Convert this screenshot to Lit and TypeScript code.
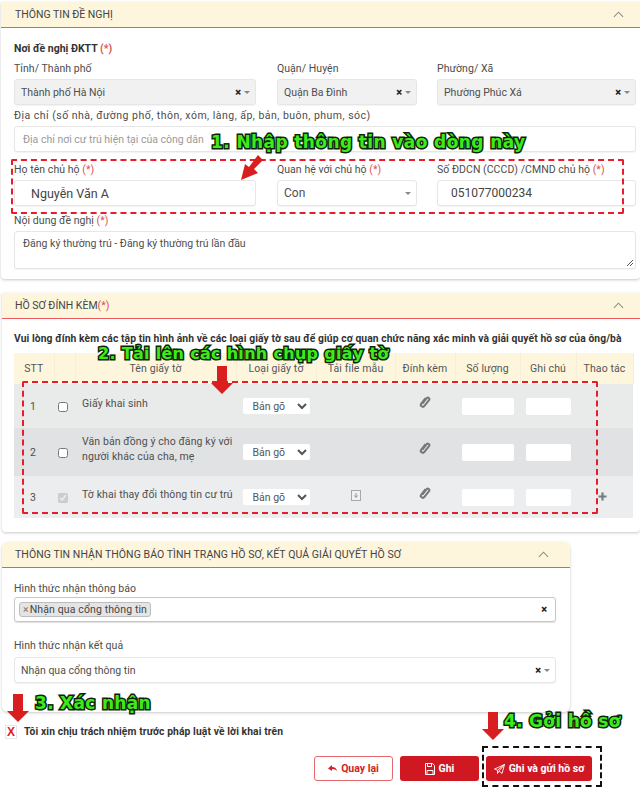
import { LitElement, html, css } from "lit";
import { customElement } from "lit/decorators.js";

const Star = () => html`<span class="req">(*)</span>`;
const chevUp = html`<svg class="chev" viewBox="0 0 12 7" width="11" height="7"><path d="M1 6l5-5 5 5" fill="none" stroke="#8a8a8a" stroke-width="1.1"/></svg>`;
const selEnd = (clear = true, arrow = true) => html`<span class="sel-end">
  ${clear ? html`<span class="x">×</span>` : ""}
  ${arrow ? html`<span class="caret"></span>` : ""}
</span>`;
const clip = html`<svg viewBox="0 0 12 14" width="12" height="14"><g transform="rotate(38 6 7)"><path d="M4 3.500v7a2 2 0 0 0 4 0V3a1.500 1.500 0 0 0-3 0v7" fill="none" stroke="#77777a" stroke-width="2"/></g></svg>`;
const dl = html`<svg viewBox="0 0 10 11" width="10" height="11"><rect x=".5" y=".5" width="9" height="10" fill="#f1f1f1" stroke="#a8a8a8"/><path d="M5 3v4M3.300 5.500L5 7.500l1.700-2" fill="none" stroke="#8a8a8a" stroke-width=".9"/></svg>`;
const plus = html`<svg viewBox="0 0 9 9" width="9" height="9"><path d="M4.500 .5v8M.5 4.500h8" stroke="#737b85" stroke-width="2.200"/></svg>`;

const rows = [
  { n: 1, name: ["Giấy khai sinh"], checked: false, dl: false, plus: false },
  { n: 2, name: ["Văn bản đồng ý cho đăng ký với", "người khác của cha, mẹ"], checked: false, dl: false, plus: false },
  { n: 3, name: ["Tờ khai thay đổi thông tin cư trú"], checked: true, dl: true, plus: true },
];

@customElement("app-root")
export class AppRoot extends LitElement {
  static styles = css`
    :host { display: block; position: relative; width: 640px; height: 791px; overflow: hidden; background: #fff;
      font-family: Roboto, "Liberation Sans", sans-serif; font-size: 10.500px; color: #4b4b4b; }
    * { box-sizing: border-box; }
    .page { display: flex; flex-direction: column; padding-top: 2px; }
    .card { background: #fff; border-radius: 0 0 4px 4px; box-shadow: 0 1px 3px rgba(0,0,0,.22); }
    .c1 { height: 277px; margin-left: 1px; }
    .c2 { height: 239px; margin: 14px 0 0 2px; }
    .c3 { height: 170px; margin: 10px 0 0 2px; width: 568px; border-radius: 6px; }
    .head { height: 26px; background: #fdf5dc; border-bottom: 1.500px solid #ee5a5d; display: flex; align-items: center;
      justify-content: space-between; padding: 0 16px 0 14px; font-size: 10.500px; color: #444; }
    .c2 .head { padding-left: 13px; }
    .c3 .head { padding-left: 13px; padding-right: 21px; border-radius: 6px 6px 0 0; letter-spacing: .06px; }
    .req { color: #d9534f; }
    .b1 { padding: 14px 3px 0 13px; }
    .title { font-weight: 700; color: #333; font-size: 10.500px; height: 13px; line-height: 13px; }
    .grid { display: grid; grid-template-columns: 263px 160px 199px; }
    .grid > .f:nth-child(1) { padding-right: 21px; }
    .grid > .f:nth-child(2) { padding-right: 20px; }
    label { display: block; height: 13px; line-height: 13px; white-space: nowrap; color: #4c4c4c; letter-spacing: .05px; }
    label.wide { letter-spacing: .48px; }
    .f { display: flex; flex-direction: column; gap: 4px; }
    .ctl { height: 26px; border: 1px solid #e6e6e6; border-radius: 3px; background: #fff; display: flex; align-items: center;
      padding: 0 5px 0 6px; box-shadow: 0 1px 1px rgba(0,0,0,.05); position: relative; color: #4f4f4f; white-space: nowrap; }
    .ro { background: #f1f1f1; }
    .sel-end { margin-left: auto; display: flex; align-items: center; gap: 3px; }
    .x { font-weight: 900; color: #222; font-size: 11px; line-height: 1; }
    .caret { width: 0; height: 0; border: 3px solid transparent; border-top: 3px solid #888; border-bottom: 0; }
    .big { font-size: 12.500px; padding-left: 16px; color: #444; }
    .num-in { padding-left: 13px; font-size: 12px; }
    .sm { font-size: 12px; }
    .ph { color: #9a9a9a; padding-left: 8px; }
    .r1 { margin-top: 7px; }
    .r2 { margin-top: 4px; width: 622px; }
    .r3 { margin-top: 11px; }
    .r4 { margin-top: 8px; width: 622px; }
    .area { height: 38px; align-items: flex-start; padding: 5px 8px; }
    .grip { position: absolute; right: 1px; bottom: 1px; }
    .note { margin: 14px 0 0 12px; height: 12px; line-height: 12px; font-weight: 700; color: #333; white-space: nowrap; font-size: 10.300px; letter-spacing: .09px; }
    table { border-collapse: collapse; table-layout: fixed; width: 619px; margin: 8px 0 0 12px; }
    th { height: 31px; background: #fdf6dd; font-weight: 400; color: #555; text-align: center; border-right: 1px solid #f5eed8; padding: 0; letter-spacing: .12px; }
    td { padding: 0; vertical-align: middle; text-align: center; color: #4f4f4f; }
    tr.a td { background: #e9eaea; height: 44px; }
    tr.b td { background: #e1e2e3; height: 48px; }
    tr.c td { background: #ecedee; height: 42px; }
    td.num { text-align: left; padding-left: 16px; }
    td.chk { padding-right: 3px; }
    td.name { text-align: left; padding: 0 0 6px 7px; line-height: 15px; white-space: nowrap; letter-spacing: .1px; }
    td.up { padding-bottom: 6px; }
    td.act { text-align: left; padding-left: 22px; }
    input[type=checkbox] { width: 10px; height: 10px; margin: 0; accent-color: #c8c8c8; vertical-align: middle; }
    select.kind { width: 67px; height: 16px; border: 0; border-radius: 2px; background: #fff; font: 10.500px Roboto, sans-serif; color: #555; padding-left: 6px; }
    .blank { display: block; height: 17px; background: #fff; border-radius: 2px; margin: auto; }
    .w1 { width: 52px; } .w2 { width: 45px; }
    .b3 { padding: 14px 14px 0 12px; }
    .multi { height: 25px; margin-top: 2px; border: 1px solid #c6c6c6; border-radius: 3px; padding: 0 8px 0 4px; display: flex; align-items: center; width: 542px; box-shadow: 0 1px 1px rgba(0,0,0,.12); }
    .tag { height: 15px; background: #e4e4e4; border: 1px solid #bdbdbd; border-radius: 3px; display: flex; align-items: center; padding: 0 3px; color: #444; letter-spacing: .12px; }
    .tag i { font-style: normal; color: #777; margin-right: 1px; }
    .single { width: 542px; margin-top: 5px; height: 26px; }
    .gap { margin-top: 17px; }
    .consent { display: flex; align-items: center; gap: 7px; margin: 12px 0 0 5px; height: 14px; font-weight: 700; color: #333; font-size: 10.300px; letter-spacing: .1px; }
    .cb { width: 12px; height: 14px; margin-top: 2px; background: #fff; border: 1px solid #e6e6e6; color: #e01b22; font: 700 12px "Liberation Sans", sans-serif; display: flex; align-items: center; justify-content: center; }
    .actions { display: flex; gap: 7px; margin: 18px 0 0 314px; }
    .btn { height: 25px; border-radius: 3px; display: flex; align-items: center; justify-content: center; gap: 4px; font-weight: 700; font-size: 10.500px; }
    .ghost { width: 79px; background: #fff; border: 1px solid #e4686c; color: #d3232a; }
    .solid { background: #d01822; color: #fff; }
    .s1 { width: 79px; } .s2 { width: 106px; }
    .ov { position: absolute; pointer-events: none; }
    .dash { border: 2px dashed #e81c2c; border-radius: 2px; }
    .d1 { left: 11px; top: 159px; width: 613px; height: 55px; }
    .d2 { left: 22px; top: 381px; width: 576px; height: 133px; }
    .d3 { left: 482px; top: 746px; width: 120px; height: 41px; border: 2px dashed #111; border-radius: 0; }
    .ann { font-family: "DejaVu Sans", sans-serif; font-weight: 700; color: #3fea1c; -webkit-text-stroke: 3px #0b2407; paint-order: stroke fill; white-space: nowrap; line-height: 20px; height: 20px; }
    .a1 { left: 211px; top: 132px; font-size: 17px; letter-spacing: .4px; }
    .a2 { left: 98px; top: 344px; font-size: 16px; letter-spacing: .3px; }
    .a3 { left: 35px; top: 693px; font-size: 17px; letter-spacing: .3px; }
    .a4 { left: 504px; top: 711px; font-size: 17px; letter-spacing: .3px; }
  `;

  downArrow(x: number, y: number) {
    return html`<svg class="ov" style="left:${x}px;top:${y}px" width="22" height="28" viewBox="0 0 22 28">
      <path d="M6 0h10v17h6L11 28 0 17h6z" fill="#d81e1e"/></svg>`;
  }

  render() {
    return html`
      <div class="page">
        <section class="card c1">
          <div class="head"><span>THÔNG TIN ĐỀ NGHỊ</span>${chevUp}</div>
          <div class="b1">
            <div class="title">Nơi đề nghị ĐKTT ${Star()}</div>
            <div class="grid r1">
              <div class="f"><label>Tỉnh/ Thành phố</label><div class="ctl ro">Thành phố Hà Nội${selEnd()}</div></div>
              <div class="f"><label>Quận/ Huyện</label><div class="ctl ro">Quận Ba Đình${selEnd()}</div></div>
              <div class="f"><label>Phường/ Xã</label><div class="ctl ro">Phường Phúc Xá${selEnd()}</div></div>
            </div>
            <div class="f r2"><label class="wide">Địa chỉ (số nhà, đường phố, thôn, xóm, làng, ấp, bản, buôn, phum, sóc)</label>
              <div class="ctl ph">Địa chỉ nơi cư trú hiện tại của công dân</div></div>
            <div class="grid r3">
              <div class="f"><label>Họ tên chủ hộ ${Star()}</label><div class="ctl big">Nguyễn Văn A</div></div>
              <div class="f"><label>Quan hệ với chủ hộ ${Star()}</label><div class="ctl sm">Con${selEnd(false)}</div></div>
              <div class="f"><label>Số ĐDCN (CCCD) /CMND chủ hộ ${Star()}</label><div class="ctl big num-in">051077000234</div></div>
            </div>
            <div class="f r4"><label>Nội dung đề nghị ${Star()}</label>
              <div class="ctl area">Đăng ký thường trú - Đăng ký thường trú lần đầu
                <svg class="grip" width="8" height="8" viewBox="0 0 8 8"><path d="M7 1L1 7M7 4L4 7" stroke="#555" stroke-width="1"/></svg>
              </div></div>
          </div>
        </section>

        <section class="card c2">
          <div class="head"><span>HỒ SƠ ĐÍNH KÈM${Star()}</span>${chevUp}</div>
          <div class="note">Vui lòng đính kèm các tập tin hình ảnh về các loại giấy tờ sau để giúp cơ quan chức năng xác minh và giải quyết hồ sơ của ông/bà</div>
          <table>
            <colgroup>
              <col style="width:40px"/><col style="width:21px"/><col style="width:161px"/><col style="width:80px"/>
              <col style="width:79px"/><col style="width:60px"/><col style="width:65px"/><col style="width:56px"/><col style="width:57px"/>
            </colgroup>
            <thead><tr><th>STT</th><th></th><th>Tên giấy tờ</th><th>Loại giấy tờ</th><th>Tải file mẫu</th><th>Đính kèm</th><th>Số lượng</th><th>Ghi chú</th><th>Thao tác</th></tr></thead>
            <tbody>
              ${rows.map((r, i) => html`<tr class=${["a", "b", "c"][i]}>
                <td class="num">${r.n}</td>
                <td class="chk"><input type="checkbox" .checked=${r.checked} ?disabled=${r.checked}/></td>
                <td class="name">${r.name.map((l) => html`${l}<br/>`)}</td>
                <td><select class="kind"><option>Bản gõ</option></select></td>
                <td>${r.dl ? dl : ""}</td>
                <td class="up">${clip}</td>
                <td><span class="blank w1"></span></td>
                <td><span class="blank w2"></span></td>
                <td class="act">${r.plus ? plus : ""}</td>
              </tr>`)}
            </tbody>
          </table>
        </section>

        <section class="card c3">
          <div class="head"><span>THÔNG TIN NHẬN THÔNG BÁO TÌNH TRẠNG HỒ SƠ, KẾT QUẢ GIẢI QUYẾT HỒ SƠ</span>${chevUp}</div>
          <div class="b3">
            <label>Hình thức nhận thông báo</label>
            <div class="multi"><span class="tag"><i>×</i>Nhận qua cổng thông tin</span>${selEnd(true, false)}</div>
            <label class="gap">Hình thức nhận kết quả</label>
            <div class="ctl single">Nhận qua cổng thông tin${selEnd()}</div>
          </div>
        </section>

        <div class="consent"><span class="cb">X</span><span>Tôi xin chịu trách nhiệm trước pháp luật về lời khai trên</span></div>

        <div class="actions">
          <div class="btn ghost"><svg width="9" height="7" viewBox="0 0 9 7"><path d="M0 3.500L4 0v2c3 0 4.500 1.500 5 4-1-1.300-2.500-2-5-2v2z" fill="#d3232a"/></svg>Quay lại</div>
          <div class="btn solid s1"><svg width="10" height="12" viewBox="0 0 10 12"><path d="M.5.500h7l2 2v9h-9zM2.500 .5v3h4v-3M2 11.500v-4h6v4" fill="none" stroke="#fff"/></svg>Ghi</div>
          <div class="btn solid s2"><svg width="11" height="10" viewBox="0 0 11 10"><path d="M10.500.5L.5 5l3 1.200L10.500.5 5 7l3 2.500zM3.500 6.200V9.500L5 7" fill="none" stroke="#fff" stroke-width=".9"/></svg>Ghi và gửi hồ sơ</div>
        </div>
      </div>

      <div class="ov dash d1"></div>
      <div class="ov dash d2"></div>
      <div class="ov dash d3"></div>
      <div class="ov ann a1">1. Nhập thông tin vào dòng này</div>
      <div class="ov ann a2">2. Tải lên các hình chụp giấy tờ</div>
      <div class="ov ann a3">3. Xác nhận</div>
      <div class="ov ann a4">4. Gởi hồ sơ</div>
      <svg class="ov" style="left:240px;top:155px" width="23" height="25" viewBox="0 0 23 25"><path d="M18 0l5 5-9 9 4 4-17 7 4-16 4 3z" fill="#d81e1e"/></svg>
      ${this.downArrow(211, 366)}
      ${this.downArrow(7, 694)}
      ${this.downArrow(482, 712)}
    `;
  }
}
